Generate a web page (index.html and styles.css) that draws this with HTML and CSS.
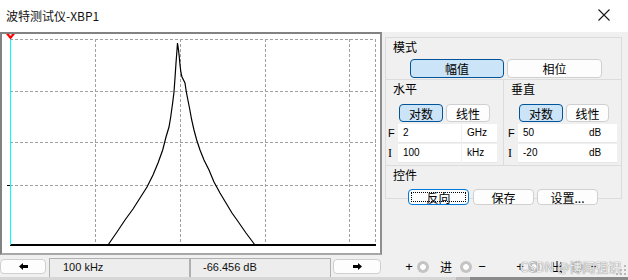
FILE: index.html
```html
<!DOCTYPE html>
<html>
<head>
<meta charset="utf-8">
<title>波特测试仪-XBP1</title>
<link rel="stylesheet" href="styles.css">
</head>
<body>
<div class="titlebar">
  <span class="title">波特测试仪-XBP1</span>
  <svg class="close" width="12" height="12" viewBox="0 0 12 12"><path d="M0.5 0.5L11.5 11.5M11.5 0.5L0.5 11.5" stroke="#1a1a1a" stroke-width="1.1" fill="none"/></svg>
</div>
<div class="content">
  <div class="left">
    <div class="graph">
      <svg width="378" height="219" viewBox="2 34 378 219">
        <g stroke="#a0a0a0" stroke-width="1" stroke-dasharray="3 2" fill="none">
          <path d="M10 39.5H376M10 91.5H376M10 142.5H376M10 185.5H376"/>
          <path d="M95.5 39V245M180.5 39V245M265.5 39V245M349.5 39V245M375.5 39V245"/>
        </g>
        <path d="M10 245H376" stroke="#000" stroke-width="2"/>
        <path d="M7 185.5H10" stroke="#000" stroke-width="1"/>
        <path d="M10.5 36V245" stroke="#00ffff" stroke-width="1"/>
        <polyline fill="none" stroke="#000" stroke-width="1.2" points="108,245 117,232 125,220 133,209 140,198 147,187 153,175 158,163 162.7,150 166,137 169,127 170.7,117 172.5,104 174,92 175,78 176,63 177,50 177.5,43 178.5,50 179.3,57 180,65 181,73 182,77 185,83 186,90 187.3,97 189.5,108 191.7,120 194,130 196.7,140 200,150 204,160 209,170 214,182 220,193 226,203 232,213 237,220 246,233 255,245"/>
        <polygon points="6,34 15,34 10.5,39.5" fill="#ff0000"/>
        <rect x="9.5" y="34" width="2" height="1.5" fill="#fff"/>
      </svg>
    </div>
    <div class="readout">
      <button class="abtn"><svg width="9" height="7" viewBox="0 0 9 7"><polygon points="0,3.5 4,0 4,2 9,2 9,5 4,5 4,7" fill="#000"/></svg></button>
      <div class="field f1">100 kHz</div>
      <div class="field f2">-66.456 dB</div>
      <button class="abtn r"><svg width="9" height="7" viewBox="0 0 9 7"><polygon points="9,3.5 5,0 5,2 0,2 0,5 5,5 5,7" fill="#000"/></svg></button>
    </div>
  </div>
  <div class="right">
    <div class="panel">
      <div class="sec mode">
        <span class="glabel">模式</span>
        <div class="row mode-btns">
          <button class="btn sel w94">幅值</button>
          <button class="btn w95">相位</button>
        </div>
      </div>
      <div class="sec hv">
        <div class="col hcol">
          <span class="glabel">水平</span>
          <div class="row sbtns">
            <button class="btn sel w44">对数</button>
            <button class="btn w44">线性</button>
          </div>
          <div class="frow">
            <span class="fl">F</span>
            <span class="inp">2</span>
            <span class="unit">GHz</span>
          </div>
          <div class="frow">
            <span class="fl serif">I</span>
            <span class="inp">100</span>
            <span class="unit">kHz</span>
          </div>
        </div>
        <div class="col vcol">
          <span class="glabel">垂直</span>
          <div class="row sbtns">
            <button class="btn sel w44">对数</button>
            <button class="btn w43">线性</button>
          </div>
          <div class="frow">
            <span class="fl">F</span>
            <span class="inp">50</span>
            <span class="unit db">dB</span>
          </div>
          <div class="frow">
            <span class="fl serif">I</span>
            <span class="inp">-20</span>
            <span class="unit db">dB</span>
          </div>
        </div>
      </div>
      <div class="sec ctrl">
        <span class="glabel">控件</span>
        <div class="row cbtns">
          <button class="btn focus w61">反向</button>
          <button class="btn w61">保存</button>
          <button class="btn w61">设置...</button>
        </div>
      </div>
    </div>
    <div class="io">
      <span class="pm">+</span>
      <span class="radio"></span>
      <span class="lbl">进</span>
      <span class="radio r2"></span>
      <span class="pm minus">−</span>
      <span class="pm g2">+</span>
      <span class="radio"></span>
      <span class="lbl">出</span>
      <span class="radio r2"></span>
      <span class="pm minus">−</span>
    </div>
    <div class="watermark">CSDN @博闻强识</div>
    <svg class="grip" width="13" height="13" viewBox="0 0 13 13">
      <g fill="#b8b8b8">
        <rect x="10" y="1" width="2" height="2"/>
        <rect x="6" y="5" width="2" height="2"/><rect x="10" y="5" width="2" height="2"/>
        <rect x="2" y="9" width="2" height="2"/><rect x="6" y="9" width="2" height="2"/><rect x="10" y="9" width="2" height="2"/>
      </g>
    </svg>
  </div>
</div>
<div class="below"></div>
</body>
</html>
```

FILE: styles.css
```css
* { box-sizing: border-box; margin: 0; padding: 0; }
html, body { width: 628px; height: 280px; overflow: hidden; }
body {
  background: #f0f0f0;
  font-family: "Noto Sans CJK SC", "Noto Sans", sans-serif;
  font-size: 12px;
  color: #000;
}
.titlebar {
  height: 32px;
  background: #fff;
  display: flex;
  align-items: center;
  padding-left: 6px;
}
.title { flex: 1; font-size: 12px; line-height: 14px; color: #111; }
.close { margin-right: 18px; margin-bottom: 2px; }

.content { display: flex; height: 245px; }
.left { width: 382px; display: flex; flex-direction: column; }
.graph {
  height: 223px;
  background: #fff;
  border-top: 2px solid #828282;
  border-left: 2px solid #828282;
  border-right: 2px solid #8e8e8e;
  border-bottom: 2px solid #a8a8a8;
}
.graph svg { display: block; }

.readout { display: flex; align-items: flex-start; height: 22px; }
.abtn {
  width: 46px; height: 15px; margin-top: 4px;
  background: #fdfdfd;
  border: 1px solid #cfcfcf;
  border-radius: 4px;
  display: flex; align-items: center; justify-content: center;
}
.abtn svg { display: block; }
.abtn.r { width: 48px; margin-left: 2px; }
.field {
  width: 141px; height: 19px; margin-top: 3px;
  background: #ededed;
  border: 1px solid #b0b0b0;
  border-bottom: none;
  font-family: "Liberation Sans", Arial, sans-serif;
  font-size: 11px;
  line-height: 16px;
  color: #111;
}
.f1 { margin-left: 3px; padding-left: 13px; border-right: 1px solid #b0b0b0; }
.f2 { padding-left: 12px; border-left: 1px solid #b0b0b0; }

.right { width: 246px; position: relative; }
.panel {
  margin: 5px 0 0 3px;
  width: 237px; height: 162px;
  border: 1px solid #dcdcdc;
}
.glabel {
  display: inline-block;
  height: 14px; line-height: 14px;
  padding: 0 3px;
  margin-left: 4px;
  background: #f0f0f0;
  font-size: 12px;
}
.sec.mode { height: 41px; }
.mode .glabel { margin-top: -7px; }
.row { display: flex; }
.mode-btns { margin: 4px 0 0 24px; gap: 3px; }
.btn {
  height: 19px;
  background: #fdfdfd;
  border: 1px solid #d0d0d0;
  border-radius: 4px;
  font-family: "Noto Sans CJK SC", sans-serif;
  font-size: 12px;
  line-height: 16px;
  color: #000;
  text-align: center;
}
.btn.sel { background: #cce4f7; border-color: #005499; }
.btn.focus { border-color: #0078d7; position: relative; }
.btn.focus::after {
  content: "";
  position: absolute;
  left: 2px; right: 2px; top: 2px; bottom: 2px;
  border: 1px dotted #000;
}
.w94 { width: 94px; } .w95 { width: 95px; }
.w44 { width: 44px; } .w43 { width: 43px; } .w61 { width: 61px; }

.sec.hv { height: 86px; border-top: 1px solid #dcdcdc; display: flex; }
.col { width: 117px; }
.hcol { border-right: 1px solid #dcdcdc; width: 118px; }
.hv .glabel { margin-top: -8px; }
.sbtns { gap: 3px; margin-top: 7px; height: 18px; }
.sbtns .btn { height: 18px; line-height: 15px; }
.hcol .sbtns { margin-left: 13px; }
.vcol .sbtns { margin-left: 15px; }
.frow { display: flex; height: 19px; margin-top: 2px; }
.frow + .frow { margin-top: 1px; }
.fl {
  width: 12px; padding-left: 2px;
  font-family: "Liberation Sans", Arial, sans-serif;
  font-size: 11px; line-height: 19px;
}
.fl.serif { font-family: "Liberation Serif", serif; font-size: 12px; }
.vcol .fl { width: 14px; padding-left: 4px; }
.inp, .unit {
  background: #fff;
  border-bottom: 1px solid #e6e6e6;
  font-family: "Liberation Sans", Arial, sans-serif;
  font-size: 10px;
  line-height: 18px;
}
.inp { width: 63px; padding-left: 5px; }
.unit { width: 35px; margin-left: 1px; padding-left: 5px; }
.unit.db { width: 36px; margin-left: 0; padding-left: 8px; }

.sec.ctrl { height: 33px; border-top: 1px solid #dcdcdc; }
.ctrl .glabel { margin-top: -8px; }
.cbtns { margin: 6px 0 0 22px; }
.cbtns .btn { height: 16px; line-height: 13px; }
.cbtns .btn + .btn { margin-left: 4px; }
.cbtns .btn + .btn + .btn { margin-left: 3px; }

.io {
  display: flex; align-items: center;
  height: 16px;
  margin-top: 60px;
  padding-left: 23px;
  font-size: 12px;
}
.pm {
  width: 8px; text-align: center;
  font-family: "Liberation Sans", Arial, sans-serif;
  font-size: 13px; line-height: 16px;
}
.pm.minus { margin-left: 6px; }
.pm.g2 { margin-left: 30px; }
.radio {
  width: 12px; height: 12px; margin-left: 4px;
  border-radius: 50%;
  background: radial-gradient(circle, #fff 0 2.5px, #c4c4c4 3.2px);
}
.radio.r2 { margin-left: 8px; }
.lbl { margin-left: 11px; width: 12px; line-height: 16px; }

.watermark {
  position: absolute;
  left: 138px; top: 227px;
  font-size: 13px; line-height: 16px;
  color: rgba(255, 255, 255, 0.85);
  text-shadow: 0 0 1px #8a8a8a, 0 0 1px #8a8a8a;
  white-space: nowrap;
}
.grip { position: absolute; right: 1px; bottom: 0; }

.below {
  height: 3px;
  background: linear-gradient(to right, #d6d6d6 0 456px, #bdbdbd 456px 470px, #8a8a8a 470px);
}
```
